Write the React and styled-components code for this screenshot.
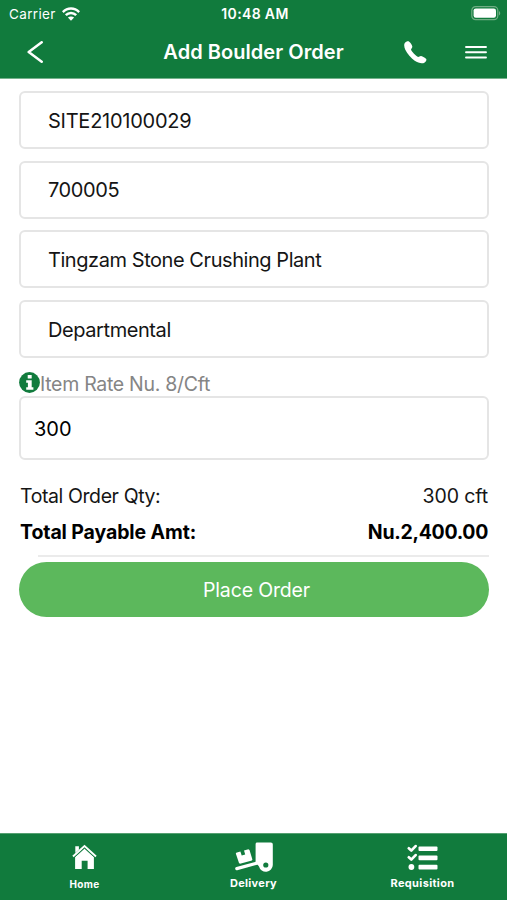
import React from 'react';
import styled, { createGlobalStyle } from 'styled-components';

const fields = [
    { text: 'SITE210100029', spacing: '-0.25px' },
    { text: '700005', spacing: '-0.4px' },
    { text: 'Tingzam Stone Crushing Plant', spacing: '-0.44px' },
    { text: 'Departmental', spacing: '-0.42px' },
]

const WifiIcon = () => (
    <svg width="18" height="14" viewBox="0 0 18 14" fill="none" stroke="#fff" strokeWidth="2.5">
        <path d="M0.8 5.1C5.4 0.3 12.6 0.3 17.2 5.1" />
        <path d="M3.8 8.2C6.8 5.2 11.2 5.2 14.2 8.2" />
        <path d="M9 13.8L5.9 10.6C7.7 9 10.3 9 12.1 10.6Z" fill="#fff" stroke="none" />
    </svg>
)

const BatteryIcon = () => (
    <svg width="30" height="15" viewBox="0 0 30 15">
        <rect x="0.8" y="0.6" width="26" height="13" rx="3.8" fill="none" stroke="#70ad84" strokeWidth="1.2" />
        <rect x="2.6" y="2.4" width="22.4" height="9.4" rx="2.2" fill="#fff" />
        <path d="M28 5v4.4c1.7-.8 1.7-3.6 0-4.4z" fill="#70ad84" />
    </svg>
)

const PhoneIcon = () => (
    <svg width="23" height="23" viewBox="0 0 23 23" fill="#fff">
        <path d="M0.8 2C2 0.6 4 -0.1 5.2 0.7C6.8 2 8 4 8.3 5.5C8.5 6.9 7.2 7.7 7 8.6C7.6 10.8 12 15.2 14.2 15.9C15.2 15.8 15.9 14.7 17.1 14.9C18.9 15.5 21 16.6 22.2 17.9C23 19.2 21.6 20.8 20.4 21.7C18.3 22.9 14.1 22.2 10.7 19.8C7.1 17.2 3.2 12.6 1.3 8.8C0.2 6.2 -0.3 3.6 0.8 2Z" />
    </svg>
)

const InfoIcon = () => (
    <svg width="21" height="21" viewBox="0 0 21 21">
        <circle cx="10.5" cy="10.5" r="10.4" fill="#117b3d" />
        <rect x="8.7" y="3" width="4" height="3.6" rx="0.6" fill="#fff" />
        <path d="M7.2 8.2H12.7V15.2H14.4V17.7H7.2V15.2H8.9V10.7H7.2Z" fill="#fff" />
    </svg>
)

const HomeIcon = () => (
    <svg width="25" height="26" viewBox="0 0 25 26">
        <path d="M3.3 2.3h3.6v3.5L3.3 9z" fill="#fff" />
        <path d="M1 12.6L12.5 2L24 12.6" fill="none" stroke="#fff" strokeWidth="2" />
        <path d="M3.1 13L12.5 4.5L21.9 13V25H15.6V16.8H9.7V25H3.1Z" fill="#fff" />
        <path d="M2.2 13.6L12.5 4.2L22.8 13.6" fill="none" stroke="#117b3d" strokeWidth="0.7" />
    </svg>
)

const DeliveryIcon = () => (
    <svg width="38" height="31" viewBox="0 0 38 31">
        <path d="M1.2 10.7L5.4 9.5L6.7 13.6L10.2 12.6L9 8.5L13.4 7.3L14.5 8L17.4 17.6L16.9 18.5L5 21.7L4 21.1L0.8 11.5Z" fill="#fff" />
        <path d="M1.8 26.6L24 20.6" stroke="#fff" strokeWidth="3.2" strokeLinecap="round" />
        <path d="M22.2 0.6H35.8C37.2 0.6 37.8 1.4 37.8 2.6V23A7 7 0 0 1 24 24.5L20.6 20V2.2C20.6 1.2 21.2 0.6 22.2 0.6Z" fill="#fff" />
        <circle cx="30.8" cy="23" r="2.6" fill="#117b3d" />
    </svg>
)

const TasksIcon = () => (
    <svg width="31" height="31" viewBox="0 0 31 31" fill="#fff">
        <path d="M1.8 6.3L4.3 8.6L8.6 4.1M1.8 15.3L4.3 17.6L8.6 13.1" fill="none" stroke="#fff" strokeWidth="2.7" strokeLinecap="round" strokeLinejoin="round" />
        <circle cx="4.4" cy="25" r="2.9" />
        <rect x="11.5" y="4.5" width="19" height="4.6" rx="1" />
        <rect x="11.5" y="13.6" width="19" height="4.6" rx="1" />
        <rect x="11.5" y="22.8" width="19" height="4.6" rx="1" />
    </svg>
)

const App = () => {
    return (
        <StScreen>
            <GlobalStyle />
            <StHeader>
                <StStatus>
                    <StCarrier>Carrier <WifiIcon /></StCarrier>
                    <StTime>10:48 AM</StTime>
                    <StBattery><BatteryIcon /></StBattery>
                </StStatus>
                <StNav>
                    <StBack>
                        <svg width="16" height="23" viewBox="0 0 16 23" fill="none" stroke="#fff" strokeWidth="2.5" strokeLinecap="round" strokeLinejoin="round">
                            <path d="M14.7 1.3L1.7 11L14.7 20.7" />
                        </svg>
                    </StBack>
                    <h1>Add Boulder Order</h1>
                    <StActions>
                        <PhoneIcon />
                        <svg width="24" height="15" viewBox="0 0 24 15" stroke="#fff" strokeWidth="1.9" strokeLinecap="round">
                            <path d="M2 2H22M2 7.2H22M2 12.5H22" />
                        </svg>
                    </StActions>
                </StNav>
            </StHeader>
            <StContent>
                <StFields>
                    {fields.map(field => (
                        <StField key={field.text} $spacing={field.spacing}>{field.text}</StField>
                    ))}
                </StFields>
                <StRate>
                    <InfoIcon />
                    <span>Item Rate Nu. 8/Cft</span>
                </StRate>
                <StQuantity>300</StQuantity>
                <StSummary>
                    <StTotal $spacing="-0.4px"><span>Total Order Qty:</span><StAmount>300 cft</StAmount></StTotal>
                    <StTotal $bold $spacing="-0.1px"><span>Total Payable Amt:</span><StAmount $bold>Nu.2,400.00</StAmount></StTotal>
                </StSummary>
                <StDivider />
                <StButton>Place Order</StButton>
            </StContent>
            <StTabBar>
                <StTab $top="10px" $gap="7px" $size="10px" $spacing="0.35px">
                    <HomeIcon />
                    <span>Home</span>
                </StTab>
                <StTab $top="8px" $gap="3px" $size="11px" $spacing="0.3px">
                    <DeliveryIcon />
                    <span>Delivery</span>
                </StTab>
                <StTab $top="8px" $gap="3px" $size="11px" $spacing="0.35px">
                    <TasksIcon />
                    <span>Requisition</span>
                </StTab>
            </StTabBar>
        </StScreen>
    );
};

const GlobalStyle = createGlobalStyle`
    * {
        box-sizing: border-box;
    }
    body {
        margin: 0;
        background: #fff;
    }
`

const StScreen = styled.div`
    width: 507px;
    height: 900px;
    display: flex;
    flex-direction: column;
    background: #fff;
    color: #151515;
    font-family: Inter, 'Liberation Sans', sans-serif;
    overflow: hidden;
    svg {
        display: block;
        flex-shrink: 0;
    }
`

const StHeader = styled.header`
    height: 79px;
    background: #117b3d;
    border-bottom: 1px solid #75b28c;
    color: #fff;
`

const StStatus = styled.div`
    height: 27px;
    display: grid;
    grid-template-columns: 1fr auto 1fr;
    align-items: center;
    padding: 0 6px 0 9px;
    font-size: 13.5px;
`

const StCarrier = styled.div`
    display: flex;
    align-items: center;
    gap: 6px;
    letter-spacing: 0.35px;
`

const StTime = styled.div`
    font-weight: 600;
    font-size: 14px;
    letter-spacing: 0.35px;
`

const StBattery = styled.div`
    justify-self: end;
`

const StNav = styled.div`
    height: 50px;
    display: grid;
    grid-template-columns: 1fr auto 1fr;
    align-items: center;
    padding: 0 19px;
    h1 {
        margin: 0;
        font-size: 20px;
        font-weight: 600;
        letter-spacing: 0.05px;
    }
`

const StBack = styled.div`
    display: flex;
    padding-left: 8px;
`

const StActions = styled.div`
    display: flex;
    align-items: center;
    justify-content: flex-end;
    gap: 37px;
`

const StContent = styled.main`
    flex: 1;
    padding: 12px 18px 0 19px;
`

const StFields = styled.div`
    display: flex;
    flex-direction: column;
    gap: 11.7px;
`

const StField = styled.div`
    height: 58px;
    display: flex;
    align-items: center;
    padding: 1px 0 0 27px;
    border: 2px solid #e5e5e5;
    border-radius: 6px;
    font-size: 20px;
    letter-spacing: ${props => props.$spacing};
`

const StRate = styled.div`
    height: 38px;
    display: flex;
    align-items: center;
    padding-top: 10px;
    color: #858585;
    font-size: 19.5px;
    letter-spacing: -0.3px;
    span {
        padding-top: 4px;
        white-space: nowrap;
    }
`

const StQuantity = styled.div`
    height: 64px;
    display: flex;
    align-items: center;
    padding: 1px 0 0 13px;
    border: 2px solid #e5e5e5;
    border-radius: 6px;
    color: #000;
    font-size: 20px;
`

const StSummary = styled.div`
    padding: 18px 1px 5px 1px;
`

const StTotal = styled.div`
    height: 36px;
    display: flex;
    align-items: center;
    justify-content: space-between;
    color: ${props => props.$bold ? '#000' : '#151515'};
    font-size: 19.5px;
    font-weight: ${props => props.$bold ? 700 : 400};
    letter-spacing: ${props => props.$spacing};
`

const StAmount = styled.span`
    letter-spacing: ${props => props.$bold ? '-0.3px' : '-0.1px'};
`

const StDivider = styled.div`
    height: 2px;
    margin: 0 0 5px 19px;
    background: #ebebeb;
`

const StButton = styled.button`
    width: 100%;
    height: 55px;
    display: block;
    padding: 0 0 0 5px;
    border: none;
    border-radius: 28px;
    background: #5cb85c;
    color: #fff;
    font-family: inherit;
    font-size: 19.5px;
    letter-spacing: -0.15px;
`

const StTabBar = styled.nav`
    height: 67px;
    display: grid;
    grid-template-columns: repeat(3, 1fr);
    background: #117b3d;
    border-top: 1px solid #55a071;
    color: #fff;
`

const StTab = styled.div`
    display: flex;
    flex-direction: column;
    align-items: center;
    padding-top: ${props => props.$top};
    gap: ${props => props.$gap};
    font-size: ${props => props.$size};
    font-weight: 700;
    line-height: 14px;
    letter-spacing: ${props => props.$spacing};
`

export default App;
